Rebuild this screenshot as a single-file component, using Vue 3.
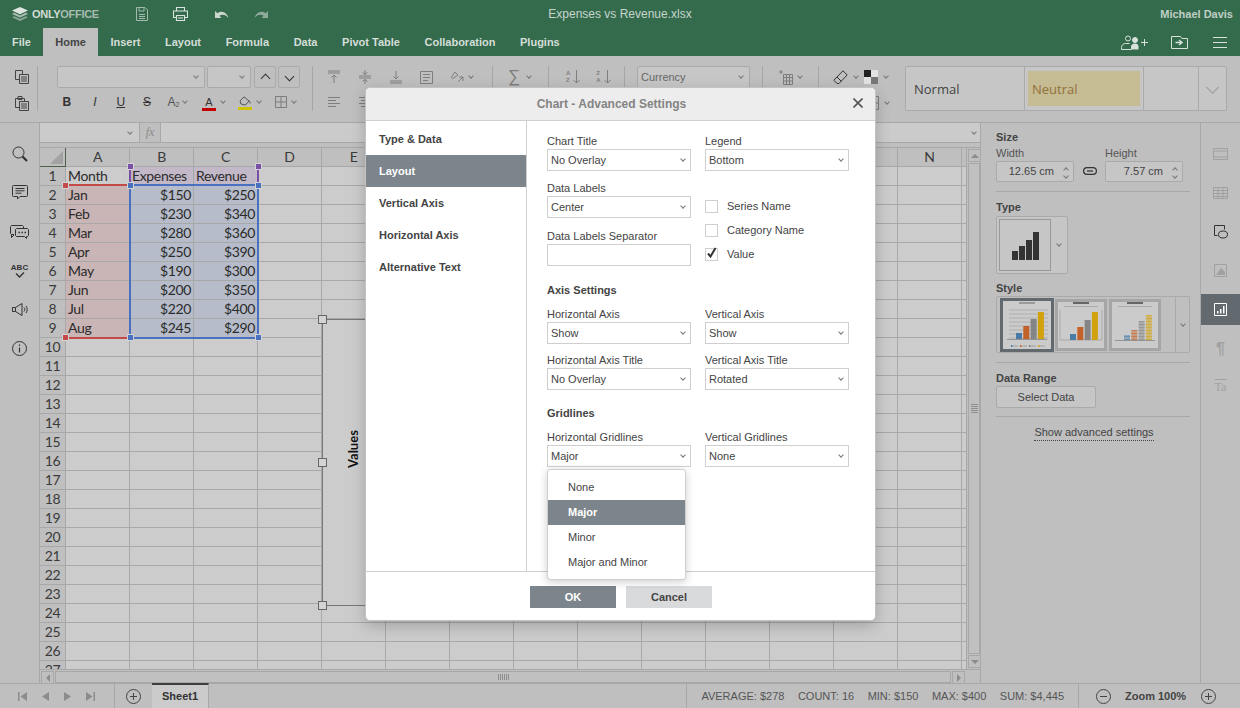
<script setup>
const tabs = ['File', 'Home', 'Insert', 'Layout', 'Formula', 'Data', 'Pivot Table', 'Collaboration', 'Plugins']
// last column only peeks out before the scrollbar, its letter is not visible
const columns = ['A', 'B', 'C', 'D', 'E', 'F', 'G', 'H', 'I', 'J', 'K', 'L', 'M', 'N', '']

const data = [
  ['Month', 'Expenses', 'Revenue'],
  ['Jan', '$150', '$250'],
  ['Feb', '$230', '$340'],
  ['Mar', '$280', '$360'],
  ['Apr', '$250', '$390'],
  ['May', '$190', '$300'],
  ['Jun', '$200', '$350'],
  ['Jul', '$220', '$400'],
  ['Aug', '$245', '$290']
]
const rowNumbers = Array.from({ length: 27 }, (_, i) => i + 1)

// class for a data cell, depending on where it falls in the chart's ranges
const cellClass = (row, col) => {
  if (row > 9 || col > 2) return ''
  if (row === 1) return col === 0 ? '' : 'hl-purple'
  return col === 0 ? 'hl-red' : 'hl-blue align-right'
}
const cellText = (row, col) => (row <= 9 && col <= 2 ? data[row - 1][col] : '')

const handles = [
  { x: 89.5, y: 18, c: 'purple' }, { x: 217.5, y: 18, c: 'purple' },
  { x: 25, y: 37, c: 'red' }, { x: 25, y: 189, c: 'red' },
  { x: 89.5, y: 37, c: 'blue' }, { x: 217.5, y: 37, c: 'blue' },
  { x: 89.5, y: 189, c: 'blue' }, { x: 217.5, y: 189, c: 'blue' }
]

const navItems = ['Type & Data', 'Layout', 'Vertical Axis', 'Horizontal Axis', 'Alternative Text']
const menuItems = ['None', 'Major', 'Minor', 'Major and Minor']

const thumbs = [
  { bars: [6, 13, 20, 27], cls: 'selected', grid: true, striped: false, axis: false, base: 38, title: '#9a9a9a' },
  { bars: [6, 13, 20, 28], cls: '', grid: false, striped: false, axis: true, base: 39, title: '#666' },
  { bars: [5, 10, 19, 25], cls: '', grid: false, striped: true, axis: false, base: 39, title: '#666' }
]
const barColors = ['#4a7ba6', '#c1622a', '#858585', '#d1a10e']
const stripeY = [16, 19, 22, 25, 28, 31, 34, 37]
</script>

<template>
  <div class="app">
    <header class="titlebar">
      <div class="logo">
        <svg width="16" height="14" viewBox="0 0 16 14">
          <path d="M8 0 16 3.600 8 7.200 0 3.600Z" fill="#dfe6e2" />
          <path d="M2.200 5.800 8 8.400l5.800-2.600L16 6.900 8 10.500 0 6.900Z" fill="#aebfb5" />
          <path d="M2.200 9.200 8 11.800l5.800-2.600L16 10.300 8 14 0 10.300Z" fill="#8aa596" />
        </svg>
        <span><b>ONLY</b>OFFICE</span>
      </div>
      <div class="quick">
        <svg width="12" height="14" viewBox="0 0 12 14" fill="none" stroke="#a3b9ac">
          <path d="M.5.500h8.500l2.500 2.500v10.500H.5z" />
          <path d="M3 .5v3.500h5V.5M3 7.500h6M3 9.500h6M3 11.500h6" />
        </svg>
        <svg width="15" height="14" viewBox="0 0 15 14" fill="none" stroke="#dbe3de">
          <path d="M3.500 4v-3.500h8V4M3.500 10.500h-3v-6.500h14v6.500h-3" stroke-width="1.100" />
          <path d="M3.500 8.500h8v5h-8zM5 11h5" stroke-width="1.100" />
        </svg>
        <svg class="undo" width="14" height="9" viewBox="0 0 14 9">
          <path d="M0 1v7h6.500L4.400 5.800C7.500 3.800 10.500 4.600 13.500 8 12.500 3.500 7.500-.6 2.500 3.200Z" fill="#c9d5ce" />
        </svg>
        <svg width="14" height="9" viewBox="0 0 14 9">
          <path d="M14 1v7H7.500l2.100-2.200C6.500 3.800 3.500 4.600.5 8 1.500 3.500 6.500-.6 11.500 3.200Z" fill="#8fa99b" />
        </svg>
      </div>
      <div class="doc-title">Expenses vs Revenue.xlsx</div>
      <div class="user">Michael Davis</div>
    </header>

    <nav class="tabbar">
      <span v-for="tab in tabs" :key="tab" class="tab" :class="{ active: tab === 'Home' }">{{ tab }}</span>
      <div class="tab-actions">
        <svg width="27" height="15" viewBox="0 0 27 15" fill="none" stroke="#d8e1dc">
          <circle cx="7" cy="3.500" r="2.500" />
          <path d="M.5 14.500v-2c0-2.500 2-4 4-4h4M.5 14.500h10" />
          <circle cx="14" cy="5" r="2.500" fill="#d8e1dc" />
          <path d="M10 14.500v-3c0-2 2-3 4-3s3.500 1 3.500 3v3z" fill="#d8e1dc" stroke="none" />
          <path d="M20 7.500h7M23.500 4v7" />
        </svg>
        <svg width="17" height="13" viewBox="0 0 17 13" fill="none" stroke="#d8e1dc">
          <path d="M.5 12.500V.5h9l1.500 2h5.500v10z" />
          <path d="M4.500 6.500h6M8 4l3 2.500L8 9" stroke-width="1.500" />
        </svg>
        <svg width="14" height="11" viewBox="0 0 14 11" stroke="#d8e1dc">
          <path d="M0 .5h14M0 5.500h14M0 10.500h14" />
        </svg>
      </div>
    </nav>

    <section class="toolbar">
      <div class="group clip">
        <svg width="14" height="14" viewBox="0 0 14 14" fill="none" stroke="#444">
          <path d="M.5.500h7v9h-7z" />
          <path d="M4.500 4.500h9v9h-9z" fill="#bfbfbf" />
          <path d="M6 7h6M6 9h6M6 11h6" />
        </svg>
        <svg width="14" height="15" viewBox="0 0 14 15" fill="none" stroke="#444">
          <path d="M.5 2.500h9v9h-9zM3 .5h4v3H3z" />
          <path d="M4.500 5.500h9v9h-9z" fill="#bfbfbf" />
          <path d="M6 8h6M6 10h6M6 12h6" />
        </svg>
      </div>
      <i class="sep s1"></i>

      <div class="group font">
        <div class="row">
          <span class="combo font-name"><i class="caret"></i></span>
          <span class="combo font-size"><i class="caret"></i></span>
          <span class="step-btn"><i class="caret up big"></i></span>
          <span class="step-btn"><i class="caret big"></i></span>
        </div>
        <div class="row fmt">
          <span class="fmt-btn bold">B</span>
          <span class="fmt-btn ital">I</span>
          <span class="fmt-btn under">U</span>
          <span class="fmt-btn strike">S</span>
          <span class="fmt-btn subs">A<small>2</small><i class="caret sm"></i></span>
          <span class="fmt-btn color">
            <span class="letter">A</span><i class="caret sm"></i>
          </span>
          <span class="fmt-btn fill">
            <svg width="14" height="14" viewBox="0 0 14 11" fill="none" stroke="#555">
              <path d="M2 5 6 .8 11 5 7.500 9 3 8z" />
              <path d="M11 4.500c1 1 1.500 2 1 3" />
            </svg>
            <i class="caret sm"></i>
          </span>
          <span class="fmt-btn borders">
            <svg width="12" height="12" viewBox="0 0 12 12" fill="none" stroke="#7d7d7d">
              <path d="M.5.500h11v11H.5zM6 .5v11M.5 6h11" />
            </svg>
            <i class="caret sm"></i>
          </span>
        </div>
      </div>
      <i class="sep s2"></i>

      <div class="group aligns">
        <div class="row">
          <svg width="14" height="14" viewBox="0 0 14 14" fill="none" stroke="#7e7e7e"><path d="M1 1h12M1 3h12M7 13V5M4.500 7.500 7 5l2.500 2.500" /></svg>
          <svg width="14" height="14" viewBox="0 0 14 14" fill="none" stroke="#7e7e7e"><path d="M1 6h12M1 8h12M7 0v4.500M4.500 2.500 7 4.500l2.500-2M7 14V9.500M4.500 11.500 7 9.500l2.500 2" /></svg>
          <svg width="14" height="14" viewBox="0 0 14 14" fill="none" stroke="#7e7e7e"><path d="M1 11h12M1 13h12M7 1v8M4.500 6.500 7 9l2.500-2.500" /></svg>
          <svg width="13" height="13" viewBox="0 0 13 13" fill="none" stroke="#7e7e7e"><path d="M.5.500h12v12H.5zM3 3.500h7M3 6.500h7M3 9.500h5" /></svg>
          <span class="with-caret">
            <svg width="14" height="14" viewBox="0 0 14 14" fill="none" stroke="#7e7e7e"><path d="M1 8 5 2l3 3-6 4M8 12l5-5M13 11V7H9" /></svg>
            <i class="caret sm"></i>
          </span>
        </div>
        <div class="row">
          <svg width="14" height="12" viewBox="0 0 14 12" stroke="#7e7e7e"><path d="M1 .5h12M1 3.500h8M1 6.500h12M1 9.500h8" /></svg>
          <svg width="14" height="12" viewBox="0 0 14 12" stroke="#7e7e7e"><path d="M1 .5h12M3 3.500h8M1 6.500h12M3 9.500h8" /></svg>
        </div>
      </div>
      <i class="sep s3"></i>

      <div class="group one sum">
        <span class="sigma">∑</span><i class="caret sm"></i>
      </div>
      <i class="sep"></i>

      <div class="group one sorts">
        <span class="sort"><span class="az">A<br>Z</span>
          <svg width="7" height="14" viewBox="0 0 7 14" fill="none" stroke="#7e7e7e"><path d="M3.500 0v13M.5 10l3 3 3-3" /></svg>
        </span>
        <span class="sort"><span class="az">Z<br>A</span>
          <svg width="7" height="14" viewBox="0 0 7 14" fill="none" stroke="#7e7e7e"><path d="M3.500 0v13M.5 10l3 3 3-3" /></svg>
        </span>
      </div>
      <i class="sep"></i>

      <div class="group one fmt-combo">
        <span class="combo currency">Currency<i class="caret"></i></span>
      </div>
      <i class="sep"></i>

      <div class="group one insert-table">
        <svg width="15" height="15" viewBox="0 0 15 15" fill="none" stroke="#7e7e7e">
          <path d="M3 0v4M1 2h4" />
          <path d="M5.500 4.500h9v10h-9zM8.500 4.500v10M11.500 4.500v10M5.500 7.500h9M5.500 11h9" />
        </svg>
        <i class="caret sm"></i>
      </div>
      <i class="sep"></i>

      <div class="group clear">
        <div class="row">
          <svg width="15" height="15" viewBox="0 0 15 15" fill="none" stroke="#333">
            <path d="M10 .8 14.200 5 6 13.500H4L.8 10.200z" />
            <path d="M4 7l4.200 4.200" />
          </svg>
          <i class="caret sm"></i>
          <svg width="14" height="14" viewBox="0 0 14 14">
            <path d="M0 0h14v14H0z" fill="#777" />
            <path d="M0 0h7v7H0z" fill="#222" />
            <path d="M7 0h7v7H7zM0 7h7v7H0z" fill="#e2e2e2" />
          </svg>
          <i class="caret sm"></i>
        </div>
        <div class="row second">
          <svg width="14" height="14" viewBox="0 0 14 14" fill="none" stroke="#7e7e7e"><path d="M.5.500h13v13H.5zM7 .5v13M.5 7h13" /></svg>
          <i class="caret sm"></i>
        </div>
      </div>

      <div class="styles">
        <div class="style-cell normal">Normal</div>
        <div class="style-cell neutral"><span>Neutral</span></div>
        <div class="style-cell empty"></div>
        <div class="style-more"><i class="caret big light"></i></div>
      </div>
    </section>

    <main class="workspace">
      <aside class="left-rail">
        <svg width="16" height="16" viewBox="0 0 16 16" fill="none" stroke="#333">
          <circle cx="6.500" cy="6.500" r="5.500" />
          <path d="M10.500 10.500 15 15" stroke-width="2.200" />
        </svg>
        <svg width="16" height="15" viewBox="0 0 16 15" fill="none" stroke="#333">
          <path d="M1.500.5h13a1 1 0 0 1 1 1v9a1 1 0 0 1-1 1H8l-2.500 2.500v-2.500h-4a1 1 0 0 1-1-1v-9a1 1 0 0 1 1-1z" />
          <path d="M3.500 3.500h9M3.500 5.800h9M3.500 8.200h6" />
        </svg>
        <svg width="19" height="14" viewBox="0 0 19 14" fill="none" stroke="#333">
          <path d="M4 9.500H1.500l-1-1v-7l1-1h11l1 1v2" />
          <path d="M1.500 9.500v3L4 10" />
          <path d="M6.500 3.500h11l1 1v6l-1 1h-1v2l-2-2h-8l-1-1v-6z" fill="#bfbfbf" />
          <path d="M8.500 7.500h1.500M11.500 7.500h1.500M14.500 7.500h1.500" stroke-width="1.500" />
        </svg>
        <span class="abc">ABC
          <svg width="10" height="6" viewBox="0 0 10 6" fill="none" stroke="#333"><path d="M1 1.500 4.500 5 9 .5" stroke-width="1.300" /></svg>
        </span>
        <svg width="16" height="13" viewBox="0 0 16 13" fill="none" stroke="#333">
          <path d="M.5 4.500h3L10 .5v12l-6.500-4h-3zM3.500 4.500v4" />
          <path d="M12 4.500c1 1 1 3 0 4M14 3c1.600 2 1.600 5 0 7" />
        </svg>
        <svg width="15" height="15" viewBox="0 0 15 15" fill="none" stroke="#333">
          <circle cx="7.500" cy="7.500" r="7" />
          <path d="M7.500 6.500v5M7.500 3.500v1.500" stroke-width="1.200" />
        </svg>
      </aside>

      <section class="sheet">
        <div class="formula-bar">
          <div class="name-box"><i class="caret"></i></div>
          <div class="fx">fx</div>
          <div class="formula-input"><i class="caret"></i></div>
        </div>
        <div class="formula-gap"></div>
        <div class="grid-area">
          <div class="grid-wrap">
            <div class="grid">
              <div class="corner"><i></i></div>
              <div v-for="col in columns" :key="col" class="col-head">{{ col }}</div>
              <template v-for="row in rowNumbers" :key="row">
                <div class="row-head">{{ row }}</div>
                <div v-for="(col, c) in columns" :key="col" class="cell" :class="cellClass(row, c)">{{ cellText(row, c) }}</div>
              </template>
            </div>

            <!-- chart object and the range markers sit on top of the cells -->
            <i class="range red-line top"></i>
            <i class="range red-line bottom"></i>
            <i class="range purple-left"></i>
            <i class="range purple-right"></i>
            <i class="range blue-box"></i>
            <i
              v-for="(h, i) in handles"
              :key="i"
              class="range-handle"
              :class="h.c"
              :style="{ left: h.x + 'px', top: h.y + 'px' }"
            ></i>

            <div class="chart-frame">
              <span class="axis-title">Values</span>
              <i class="frame-handle tl"></i>
              <i class="frame-handle ml"></i>
              <i class="frame-handle bl"></i>
            </div>
          </div>
          <div class="vscroll">
            <span class="scroll-btn"><i class="tri up"></i></span>
            <span class="vthumb"><i class="grip-h"></i></span>
            <span class="scroll-btn"><i class="tri down"></i></span>
          </div>
        </div>
        <div class="hscroll">
          <span class="scroll-btn"><i class="tri left"></i></span>
          <span class="hthumb"><i class="grip-v"></i></span>
          <span class="scroll-btn"><i class="tri right"></i></span>
        </div>
      </section>

      <aside class="side-panel">
        <div class="panel-block size-block">
          <div class="panel-title">Size</div>
          <div class="size-row">
            <div class="size-field">
              <label>Width</label>
              <div class="spinner">12.65 cm<span class="spin"><i class="caret up"></i><i class="caret"></i></span></div>
            </div>
            <svg class="link" width="14" height="8" viewBox="0 0 14 8" fill="none" stroke="#333" stroke-width="1.200">
              <rect x=".6" y=".6" width="12.800" height="6.800" rx="3.400" />
              <path d="M4 4h6" />
            </svg>
            <div class="size-field">
              <label>Height</label>
              <div class="spinner">7.57 cm<span class="spin"><i class="caret up"></i><i class="caret"></i></span></div>
            </div>
          </div>
        </div>
        <div class="type-block">
          <div class="panel-title">Type</div>
          <div class="type-box">
            <div class="type-icon">
              <svg width="27" height="28" viewBox="0 0 27 28" fill="#333">
                <path d="M0 19h6v9H0zM7 14h6v14H7zM14 8h6v20h-6zM21 0h6v28h-6z" />
              </svg>
            </div>
            <i class="caret"></i>
          </div>
        </div>
        <div class="panel-block style-block">
          <div class="panel-title">Style</div>
          <div class="style-box">
            <div class="thumbs">
              <div v-for="(t, i) in thumbs" :key="i" class="thumb" :class="t.cls">
                <svg width="46" height="47" viewBox="0 0 46 47">
                  <rect x="15" y="1" width="16" height="2" :fill="t.title" />
                  <rect v-if="!t.grid" x="6" y="5" width="34" height="1" fill="#a9a9a9" />
                  <g v-if="t.grid" stroke="#9e9e9e" stroke-width=".6">
                    <path v-for="n in 8" :key="n" :d="`M5 ${n * 4 + 5}H44`" />
                  </g>
                  <path v-if="t.axis" d="M2 9v30h42V9" fill="none" stroke="#aaa" />
                  <rect v-else x="3" :y="t.base" width="40" height=".8" fill="#858585" />
                  <g v-for="(b, j) in t.bars" :key="j">
                    <rect :x="12 + j * 7.300" :y="t.base - b" width="6" :height="b" :fill="barColors[j]" :opacity="t.striped ? 0.75 : 1" />
                  </g>
                  <g v-if="t.striped" stroke="#cbcbcb" stroke-width=".8">
                    <path v-for="y in stripeY" :key="y" :d="`M11 ${y}H41`" />
                  </g>
                  <g v-if="t.grid">
                    <rect v-for="(c, j) in barColors" :key="c" :x="7 + j * 9" y="44" width="1.500" height="2" :fill="c" />
                    <rect v-for="(c, j) in barColors" :key="j" :x="9 + j * 9" y="44.500" width="5" height="1" fill="#a0a0a0" />
                  </g>
                </svg>
              </div>
            </div>
            <div class="style-arrow"><i class="caret"></i></div>
          </div>
        </div>
        <div class="panel-block range-block">
          <div class="panel-title">Data Range</div>
          <button class="select-data" type="button">Select Data</button>
        </div>
        <div class="advanced"><span>Show advanced settings</span></div>
      </aside>

      <aside class="right-rail">
        <span class="rail-btn">
          <svg width="15" height="12" viewBox="0 0 15 12" fill="none" stroke="#a0a0a0"><path d="M.5.500h14v11H.5zM.5 3h14M.5 9h14" /></svg>
        </span>
        <span class="rail-btn">
          <svg width="15" height="12" viewBox="0 0 15 12" fill="none" stroke="#a0a0a0"><path d="M.5.500h14v11H.5zM.5 3.500h14M.5 6.500h14M.5 9.500h14M5 .5v11M10 .5v11" /></svg>
        </span>
        <span class="rail-btn">
          <svg width="14" height="14" viewBox="0 0 14 14" fill="none" stroke="#333"><path d="M3.500 10.500h-3V.5h10v4" /><ellipse cx="9" cy="9.500" rx="4.500" ry="3.500" /></svg>
        </span>
        <span class="rail-btn">
          <svg width="13" height="13" viewBox="0 0 13 13" fill="none" stroke="#a0a0a0"><path d="M.5.500h12v12H.5z" /><path d="M2 11 7 4l4 4v3z" fill="#a0a0a0" stroke="none" /></svg>
        </span>
        <span class="rail-btn selected">
          <svg width="13" height="13" viewBox="0 0 13 13" fill="none" stroke="#fff"><path d="M.5.500h12v12H.5z" /><path d="M3 8v2.500h1.500V8zM6 6v4.500h1.500V6zM9 3v7.500h1.500V3z" fill="#fff" stroke="none" /></svg>
        </span>
        <span class="rail-btn pilcrow">¶</span>
        <span class="rail-btn art">Ta</span>
      </aside>
    </main>

    <footer class="statusbar">
      <div class="sheet-nav">
        <svg width="9" height="9" viewBox="0 0 9 9" fill="#8c8c8c"><path d="M0 0h1.500v9H0zM9 0v9L2.500 4.500z" /></svg>
        <svg width="7" height="9" viewBox="0 0 7 9" fill="#8c8c8c"><path d="M7 0v9L0 4.500z" /></svg>
        <svg width="7" height="9" viewBox="0 0 7 9" fill="#8c8c8c"><path d="M0 0v9l7-4.500z" /></svg>
        <svg width="9" height="9" viewBox="0 0 9 9" fill="#8c8c8c"><path d="M9 0H7.500v9H9zM0 0v9l6.500-4.500z" /></svg>
      </div>
      <div class="add-sheet">
        <span class="round-btn"><svg width="7" height="7" viewBox="0 0 7 7" stroke="#444"><path d="M0 3.500h7M3.500 0v7" /></svg></span>
      </div>
      <div class="sheet-tab">Sheet1</div>
      <div class="stats">
        <span>AVERAGE: $278</span>
        <span>COUNT: 16</span>
        <span>MIN: $150</span>
        <span>MAX: $400</span>
        <span>SUM: $4,445</span>
      </div>
      <div class="zoom">
        <span class="round-btn"><svg width="7" height="7" viewBox="0 0 7 7" stroke="#444"><path d="M0 3.500h7" /></svg></span>
        <b>Zoom 100%</b>
        <span class="round-btn"><svg width="7" height="7" viewBox="0 0 7 7" stroke="#444"><path d="M0 3.500h7M3.500 0v7" /></svg></span>
      </div>
    </footer>

    <!-- Advanced settings dialog -->
    <div class="dialog">
      <div class="dialog-head">
        <span>Chart - Advanced Settings</span>
        <svg class="close" width="10" height="10" viewBox="0 0 10 10" stroke="#555" stroke-width="1.600"><path d="M.5.500l9 9M9.500.5l-9 9" /></svg>
      </div>
      <div class="dialog-body">
        <ul class="dialog-nav">
          <li v-for="item in navItems" :key="item" :class="{ selected: item === 'Layout' }">{{ item }}</li>
        </ul>
        <div class="dialog-form">
          <div class="form-row">
            <div class="field"><label>Chart Title</label><div class="select">No Overlay<i class="caret"></i></div></div>
            <div class="field"><label>Legend</label><div class="select">Bottom<i class="caret"></i></div></div>
          </div>
          <div class="form-row labels-row">
            <div class="labels-left">
              <div class="field"><label>Data Labels</label><div class="select">Center<i class="caret"></i></div></div>
              <div class="field sep-field"><label>Data Labels Separator</label><div class="select"></div></div>
            </div>
            <div class="checks">
              <div class="check"><i class="box"></i>Series Name</div>
              <div class="check"><i class="box"></i>Category Name</div>
              <div class="check">
                <i class="box"><svg width="13" height="13" viewBox="0 0 13 13" fill="none" stroke="#333" stroke-width="2"><path d="M3 6.500l2.500 3L10.500 1" /></svg></i>Value
              </div>
            </div>
          </div>
          <h4 class="form-heading axis">Axis Settings</h4>
          <div class="form-row">
            <div class="field"><label>Horizontal Axis</label><div class="select">Show<i class="caret"></i></div></div>
            <div class="field"><label>Vertical Axis</label><div class="select">Show<i class="caret"></i></div></div>
          </div>
          <div class="form-row gap-top">
            <div class="field"><label>Horizontal Axis Title</label><div class="select">No Overlay<i class="caret"></i></div></div>
            <div class="field"><label>Vertical Axis Title</label><div class="select">Rotated<i class="caret"></i></div></div>
          </div>
          <h4 class="form-heading grid-heading">Gridlines</h4>
          <div class="form-row">
            <div class="field"><label>Horizontal Gridlines</label><div class="select">Major<i class="caret"></i></div></div>
            <div class="field"><label>Vertical Gridlines</label><div class="select">None<i class="caret"></i></div></div>
          </div>
          <ul class="dropdown">
            <li v-for="item in menuItems" :key="item" :class="{ selected: item === 'Major' }">{{ item }}</li>
          </ul>
        </div>
      </div>
      <div class="dialog-foot">
        <button class="btn primary" type="button">OK</button>
        <button class="btn" type="button">Cancel</button>
      </div>
    </div>
  </div>
</template>

<style>
html, body { margin: 0; padding: 0; background: #bfbfbf; }
</style>

<style scoped>
* { box-sizing: border-box; }
.app {
  position: relative;
  width: 1240px;
  height: 708px;
  overflow: hidden;
  display: flex;
  flex-direction: column;
  background: #bfbfbf;
  font-family: "Liberation Sans", Arial, sans-serif;
  font-size: 11px;
  color: #444;
}
ul { list-style: none; margin: 0; padding: 0; }

/* little chevrons used everywhere */
.caret {
  display: inline-block;
  flex: none;
  width: 4px;
  height: 4px;
  border-right: 1px solid #777;
  border-bottom: 1px solid #777;
  transform: rotate(45deg);
  margin-top: -2px;
}
.caret.up { transform: rotate(225deg); margin-top: 2px; }
.caret.big { width: 7px; height: 7px; border-color: #333; border-width: 1.500px; }
.caret.sm { width: 4px; height: 4px; border-color: #777; }
.caret.light { border-color: #999; border-width: 1px; width: 9px; height: 9px; }

.titlebar {
  height: 28px;
  flex: none;
  background: #346b4c;
  display: flex;
  align-items: center;
  position: relative;
  color: #c5d3cb;
}
.logo { display: flex; align-items: center; gap: 4px; margin-left: 12px; font-size: 11px; font-weight: 700; letter-spacing: -.3px; color: #a8bcb0; }
.logo b { color: #d2dcd6; }
.quick { display: flex; align-items: center; margin-left: 37px; gap: 25px; }
.quick .undo { margin-left: 2px; }
.doc-title { position: absolute; left: 0; right: 0; text-align: center; font-size: 12px; color: #c7d4cc; }
.user { margin-left: auto; margin-right: 7px; font-weight: 700; font-size: 11px; color: #c0cfc6; }

.tabbar { height: 28px; flex: none; background: #346b4c; display: flex; align-items: stretch; }
.tab { padding: 0 12.300px; line-height: 28px; font-weight: 700; color: #d4ded8; white-space: nowrap; }
.tab:first-child { padding: 0 12px; }
.tab.active { background: #bfbfbf; color: #444; }
.tab-actions { margin-left: auto; display: flex; align-items: center; gap: 25px; padding-right: 13px; padding-top: 1px; }
.tab-actions svg:first-child { margin-right: -2px; }

.toolbar {
  height: 67px;
  flex: none;
  display: flex;
  padding-top: 10px;
  border-bottom: 1px solid #a8a8a8;
  background: #bfbfbf;
}
.group { display: flex; flex-direction: column; gap: 4px; }
.row { display: flex; align-items: center; height: 22px; }
.one { flex-direction: row; height: 22px; align-items: center; }
.sep { flex: none; width: 1px; height: 45px; background: #a6a6a6; display: block; }
.clip { width: 14px; margin-left: 15px; gap: 12px; padding-top: 4px; align-items: center; }
.s1 { margin-left: 8px; }
.font { margin-left: 19px; width: 243px; }
.combo {
  height: 22px;
  border: 1px solid #aaa;
  border-radius: 2px;
  background: #c6c6c6;
  display: flex;
  align-items: center;
  justify-content: flex-end;
  padding: 0 6px;
}
.font-name { width: 148px; }
.font-size { width: 44px; margin-left: 2px; }
.step-btn {
  width: 22px;
  height: 22px;
  margin-left: 3px;
  border: 1px solid #aaa;
  border-radius: 2px;
  display: flex;
  align-items: center;
  justify-content: center;
}
.step-btn + .step-btn { margin-left: 2px; }
.fmt { height: 20px; }
.fmt-btn { display: flex; align-items: center; justify-content: center; height: 20px; font-size: 12px; color: #333; gap: 5px; }
.bold { width: 20px; font-weight: 700; }
.ital { width: 26px; margin-left: 5px; font-style: italic; }
.under { width: 26px; text-decoration: underline; }
.strike { width: 27px; text-decoration: line-through; }
.subs { width: 34px; color: #555; gap: 4px; }
.subs small { font-size: 7px; margin: 4px 0 0 -4px; }
.color { width: 30px; margin-left: 4px; }
.letter { border-bottom: 3px solid #c40000; padding: 0 3px; line-height: 12px; margin-top: 2px; font-size: 11px; }
.fill { width: 30px; margin-left: 6px; }
.fill svg { border-bottom: 3px solid #d0c400; margin-top: 2px; }
.borders { width: 30px; margin-left: 6px; }
.s2 { margin-left: 12px; }
.aligns { margin-left: 14px; width: 150px; }
.aligns .row svg { flex: none; margin-right: 17px; }
.with-caret { display: flex; align-items: center; gap: 5px; }
.with-caret svg { margin-right: 0 !important; }
.s3 { margin-left: 15px; }
.sum { margin-left: 15px; width: 40px; gap: 7px; }
.sigma { font-size: 17px; color: #7e7e7e; }
.sorts { margin-left: 17px; width: 58px; gap: 16px; }
.sort { display: flex; align-items: center; gap: 3px; }
.az { font-size: 6px; line-height: 7px; font-weight: 700; color: #7e7e7e; }
.fmt-combo { margin-left: 12px; width: 125px; }
.currency { width: 113px; justify-content: space-between; color: #666; padding: 0 6px 0 3px; }
.insert-table { margin-left: 15px; width: 40px; gap: 5px; }
.clear { margin-left: 14px; width: 72px; }
.clear .row { gap: 6px; }
.clear .row.second { padding-left: 32px; }
.styles {
  width: 322px;
  height: 45px;
  border: 1px solid #aaa;
  border-radius: 2px;
  display: flex;
  background: #c6c6c6;
  font-family: "Open Sans", sans-serif;
  font-size: 13px;
}
.style-cell { border-right: 1px solid #aaa; padding: 4px 3px; }
.normal { width: 119px; line-height: 37px; padding: 4px 8px; color: #444; }
.neutral { width: 119px; }
.neutral span { display: block; height: 100%; background: #c6bc93; color: #92703a; line-height: 37px; padding-left: 4px; }
.empty { width: 55px; }
.style-more { flex: 1; display: flex; align-items: center; justify-content: center; }

.workspace { flex: 1; min-height: 0; display: flex; }
.left-rail {
  width: 40px;
  flex: none;
  border-right: 1px solid #a8a8a8;
  display: grid;
  grid-auto-rows: 39px;
  place-items: center;
  align-content: start;
  padding-top: 11px;
}
.abc { display: flex; flex-direction: column; align-items: center; font-size: 8px; font-weight: 700; color: #333; line-height: 8px; }

.sheet { flex: 1; min-width: 0; display: flex; flex-direction: column; }
.formula-bar { height: 20px; flex: none; display: flex; background: #cbcbcb; border-bottom: 1px solid #a8a8a8; }
.name-box { width: 100px; display: flex; align-items: center; justify-content: flex-end; padding-right: 7px; border-right: 1px solid #a8a8a8; }
.fx { width: 21px; background: #bfbfbf; border-right: 1px solid #a8a8a8; text-align: center; line-height: 19px; font-family: "Liberation Serif", serif; font-style: italic; font-size: 12px; color: #8c8c8c; }
.formula-input { flex: 1; display: flex; align-items: center; justify-content: flex-end; padding-right: 4px; }
.formula-gap { height: 5px; flex: none; border-bottom: 1px solid #a8a8a8; }
.grid-area { flex: 1; min-height: 0; display: flex; }
.grid-wrap { flex: 1; min-width: 0; position: relative; overflow: hidden; background: #ccc; }
.grid {
  display: grid;
  grid-template-columns: 26px repeat(15, 64px);
  grid-auto-rows: 19px;
  font-family: Lato, "Open Sans", sans-serif;
  font-size: 14px;
  letter-spacing: -.35px;
  color: #2b2b2b;
}
.corner { background: #bfbfbf; border-right: 1px solid #4d5f4d; border-bottom: 1px solid #4d5f4d; position: relative; }
.corner i { position: absolute; right: 2px; bottom: 2px; border-style: solid; border-width: 0 0 13px 13px; border-color: transparent transparent #a2a2a2; }
.col-head, .row-head {
  background: #bfbfbf;
  border-right: 1px solid #a8a8a8;
  border-bottom: 1px solid #a8a8a8;
  display: flex;
  align-items: center;
  justify-content: center;
  color: #3a3a3a;
  line-height: 1;
}
.cell {
  border-right: 1px solid #a8a8a8;
  border-bottom: 1px solid #a8a8a8;
  padding: 0 2px;
  line-height: 17px;
  white-space: nowrap;
  overflow: hidden;
}
.align-right { text-align: right; }
.hl-red { background: #c9b5b5; }
.hl-blue { background: #b6bcc9; }
.hl-purple { background: #c2b8c8; }

.range { position: absolute; display: block; }
.red-line { left: 26px; width: 64px; height: 2px; background: #c44a4a; }
.red-line.top { top: 36px; }
.red-line.bottom { top: 189px; }
.purple-left, .purple-right { top: 19px; width: 2px; height: 18px; background: #7a50a4; }
.purple-left { left: 88.500px; }
.purple-right { left: 217px; }
.blue-box { left: 88.500px; top: 36px; width: 130.500px; height: 155px; border: 2px solid #4a70c0; }
.range-handle {
  position: absolute;
  width: 7px;
  height: 7px;
  margin: -3px 0 0 -3px;
  border: 1px solid #d4d4d4;
}
.range-handle.purple { background: #7a50a4; }
.range-handle.red { background: #c44a4a; }
.range-handle.blue { background: #4a70c0; }

.chart-frame {
  position: absolute;
  left: 282px;
  top: 171px;
  width: 478px;
  height: 287px;
  border: 1px solid #777;
  background: #ccc;
}
.axis-title {
  position: absolute;
  left: 22px;
  top: 148px;
  font-family: Lato, "Open Sans", sans-serif;
  font-size: 13px;
  font-weight: 700;
  line-height: 16px;
  color: #111;
  transform: rotate(-90deg);
  transform-origin: left top;
  white-space: nowrap;
}
.frame-handle { position: absolute; width: 9px; height: 9px; left: -5px; background: #d4d4d4; border: 1px solid #666; }
.frame-handle.tl { top: -5px; }
.frame-handle.ml { top: 138px; }
.frame-handle.bl { bottom: -5px; }

.vscroll { width: 14px; flex: none; display: flex; flex-direction: column; padding: 1px 0 1px 1px; gap: 1px; border-left: 1px solid #a8a8a8; background: #bfbfbf; }
.scroll-btn {
  flex: none;
  width: 13px;
  height: 13px;
  border: 1px solid #a8a8a8;
  display: flex;
  align-items: center;
  justify-content: center;
}
.vthumb, .hthumb { flex: 1; border: 1px solid #a8a8a8; display: flex; align-items: center; justify-content: center; background: #c0c0c0; }
.grip-h { width: 7px; height: 9px; background: repeating-linear-gradient(#8f8f8f 0 1px, transparent 1px 2px); display: block; }
.grip-v { width: 11px; height: 6px; background: repeating-linear-gradient(90deg, #8f8f8f 0 1px, transparent 1px 2px); display: block; }
.tri { display: block; width: 0; height: 0; border-style: solid; }
.tri.up { border-width: 0 4px 4px; border-color: transparent transparent #8c8c8c; }
.tri.down { border-width: 4px 4px 0; border-color: #8c8c8c transparent transparent; }
.tri.left { border-width: 4px 4px 4px 0; border-color: transparent #8c8c8c transparent transparent; }
.tri.right { border-width: 4px 0 4px 4px; border-color: transparent transparent transparent #8c8c8c; }
.hscroll { height: 14px; flex: none; display: flex; padding: 1px 15px 0 1px; gap: 1px; border-top: 1px solid #a8a8a8; background: #bfbfbf; }

.side-panel { width: 221px; flex: none; border-left: 1px solid #a8a8a8; border-right: 1px solid #a8a8a8; padding: 0 10px 0 15px; }
.panel-block { border-bottom: 1px solid #a8a8a8; }
.panel-title { font-weight: 700; color: #444; line-height: 14px; }
.size-block { height: 69px; padding-top: 7px; }
.size-row { display: flex; align-items: flex-end; }
.size-field label { display: block; height: 14px; line-height: 14px; margin: 2px 0 1px; color: #555; }
.spinner {
  width: 78px;
  height: 21px;
  border: 1px solid #aaa;
  border-radius: 2px;
  line-height: 19px;
  text-align: right;
  padding-right: 19px;
  position: relative;
  color: #444;
  background: #c6c6c6;
}
.spin { position: absolute; right: 5px; top: 0; bottom: 0; display: flex; flex-direction: column; justify-content: center; gap: 4px; }
.size-row .link { flex: none; margin: 0 8px 7px 9px; }
.type-block { height: 89px; padding-top: 8px; }
.type-box { width: 72px; height: 58px; margin-top: 2px; border: 1px solid #aaa; border-radius: 2px; display: flex; align-items: center; padding-left: 2px; gap: 6px; background: #c6c6c6; }
.type-icon { width: 52px; height: 52px; border: 1px solid #999; display: flex; align-items: center; justify-content: center; padding-top: 1px; }
.style-block { height: 82px; }
.style-box { height: 57px; margin-top: 1px; border: 1px solid #aaa; border-radius: 2px; display: flex; }
.thumbs { flex: 1; display: flex; align-items: center; padding-left: 3px; gap: 1px; }
.thumb { width: 52px; height: 52px; border: 3px solid #a6a6a6; background: #cbcbcb; display: flex; align-items: center; justify-content: center; overflow: hidden; }
.thumb + .thumb + .thumb { margin-left: 1px; }
.thumb.selected { border-color: #62696f; width: 54px; height: 54px; }
.style-arrow { width: 14px; border-left: 1px solid #aaa; display: flex; align-items: center; justify-content: center; }
.range-block { height: 54px; padding-top: 8px; }
.select-data {
  display: block;
  margin-top: 1px;
  width: 100px;
  height: 22px;
  border: 1px solid #aaa;
  border-radius: 2px;
  background: #c6c6c6;
  color: #444;
  font: 11px "Liberation Sans", Arial, sans-serif;
}
.advanced { text-align: center; padding-top: 8px; color: #444; padding-left: 2px; }
.advanced span { display: inline-block; border-bottom: 1px dotted #444; line-height: 14px; padding-bottom: 1px; }

.right-rail { width: 39px; flex: none; display: flex; flex-direction: column; padding-top: 11px; }
.rail-btn { height: 39px; display: flex; align-items: center; justify-content: center; color: #a0a0a0; }
.rail-btn.selected { background: #62696f; height: 31px; margin: 4px 0; }
.pilcrow { font-size: 16px; font-weight: 700; }
.art { font-size: 12px; text-decoration: overline; font-family: "Liberation Serif", serif; }

.statusbar { height: 25px; flex: none; border-top: 1px solid #a8a8a8; display: flex; align-items: center; position: relative; }
.sheet-nav { width: 115px; height: 100%; display: flex; align-items: center; gap: 15px; padding-left: 18px; border-right: 1px solid #a8a8a8; }
.add-sheet { width: 37px; display: flex; justify-content: center; }
.round-btn { width: 15px; height: 15px; border: 1px solid #444; border-radius: 50%; display: flex; align-items: center; justify-content: center; flex: none; }
.sheet-tab {
  width: 57px;
  height: 25px;
  margin-top: -2px;
  border-top: 2px solid #3f3f3f;
  border-right: 1px solid #a8a8a8;
  background: #cbcbcb;
  text-align: center;
  line-height: 22px;
  font-weight: 700;
  color: #333;
}
.stats { margin-left: auto; height: 100%; display: flex; align-items: center; gap: 13.500px; color: #555; border-left: 1px solid #a8a8a8; padding: 0 14px; }
.zoom { width: 162px; height: 100%; display: flex; align-items: center; gap: 14px; padding-left: 17px; border-left: 1px solid #a8a8a8; color: #444; }
.zoom .round-btn:last-child { margin-left: 1px; }

.dialog {
  position: absolute;
  left: 365px;
  top: 87px;
  width: 511px;
  height: 534px;
  background: #fff;
  border: 1px solid #c2c2c2;
  border-radius: 5px;
  box-shadow: 0 5px 15px rgba(0, 0, 0, .2);
  display: flex;
  flex-direction: column;
  z-index: 10;
}
.dialog-head {
  height: 33px;
  flex: none;
  background: #ededed;
  border-bottom: 1px solid #cfcfcf;
  border-radius: 5px 5px 0 0;
  text-align: center;
  line-height: 33px;
  font-size: 12px;
  font-weight: 700;
  color: #848484;
  position: relative;
  padding-right: 18px;
}
.close { position: absolute; right: 12px; top: 10px; }
.dialog-body { height: 451px; flex: none; display: flex; border-bottom: 1px solid #cfcfcf; }
.dialog-nav { width: 161px; flex: none; border-right: 1px solid #cfcfcf; padding-top: 2px; }
.dialog-nav li { height: 32px; line-height: 32px; padding-left: 13px; font-weight: 700; color: #444; }
.dialog-nav li.selected { background: #7d858c; color: #fff; }
.dialog-form { flex: 1; padding: 13px 0 0 20px; position: relative; }
.form-row { display: flex; gap: 14px; }
.field { width: 144px; }
.field label { display: block; height: 14px; line-height: 14px; color: #444; margin-bottom: 1px; white-space: nowrap; }
.select {
  height: 22px;
  border: 1px solid #cfcfcf;
  line-height: 20px;
  padding: 0 5px 0 3px;
  color: #444;
  display: flex;
  justify-content: space-between;
  align-items: center;
}
.labels-row { margin-top: 10px; }
.sep-field { margin-top: 11px; }
.checks { padding-top: 18px; }
.check { display: flex; align-items: center; height: 14px; margin-bottom: 10px; color: #444; }
.check:last-child { margin-bottom: 0; }
.box { display: block; width: 13px; height: 13px; border: 1px solid #cfcfcf; margin-right: 9px; position: relative; }
.box svg { position: absolute; left: -1px; top: -2px; }
.form-heading { margin: 0; font-size: 11px; font-weight: 700; line-height: 14px; color: #444; }
.axis { margin-top: 17px; margin-bottom: 10px; }
.gap-top { margin-top: 9px; }
.grid-heading { margin-top: 16px; margin-bottom: 10px; }
.dropdown {
  position: absolute;
  left: 20px;
  top: 348px;
  width: 139px;
  height: 111px;
  background: #fff;
  border: 1px solid #cfcfcf;
  border-radius: 3px;
  padding-top: 5px;
  box-shadow: 0 2px 8px rgba(0, 0, 0, .2);
}
.dropdown li { height: 25px; line-height: 25px; padding-left: 20px; color: #444; }
.dropdown li.selected { background: #7d858c; color: #fff; font-weight: 700; }
.dialog-foot { flex: 1; display: flex; justify-content: center; gap: 10px; padding-top: 14px; padding-left: 1px; }
.btn { width: 86px; height: 22px; border: 0; background: #d8dadc; color: #444; font: 700 11px "Liberation Sans", Arial, sans-serif; }
.btn.primary { background: #7d858c; color: #fff; }
</style>
